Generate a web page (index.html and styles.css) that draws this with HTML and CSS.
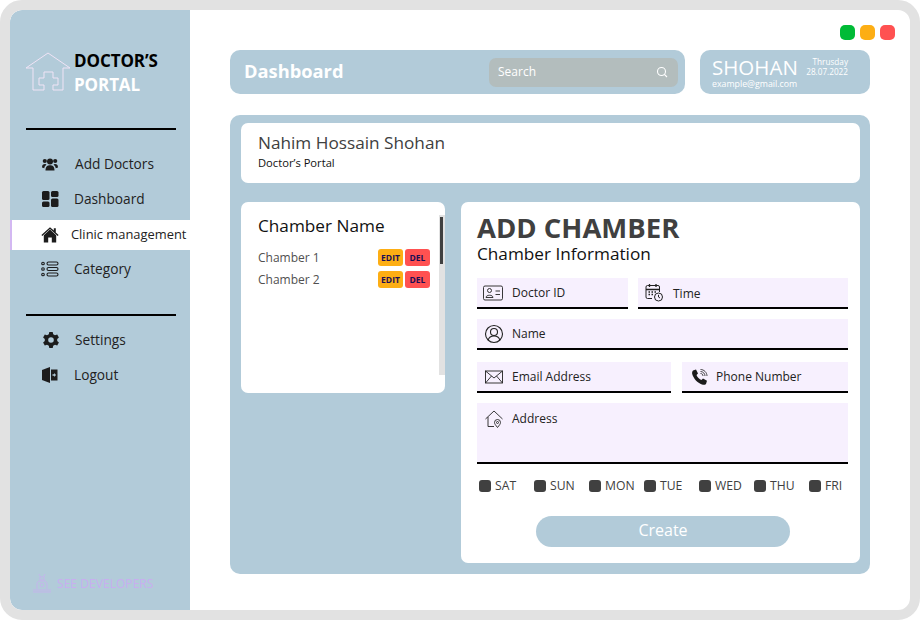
FILE: index.html
```html
<!DOCTYPE html>
<html>
<head>
  <title>Doctor's Portal</title>
  <meta name="viewport" content="width=device-width, initial-scale=1.0">
  <link rel="stylesheet" href="styles.css">
</head>
<body>
  <div class="frame">
    <aside class="sidebar">
      <div class="brand">
        <svg class="brand-icon" width="46" height="40" viewBox="0 0 46 40" fill="none" stroke="#f0e4f6" stroke-width="1">
          <path d="M1 16 L23 1 L45 16 H38 V38 H28 V33 H33 V26 H28 V20 H19 V26 H14 V33 H19 V38 H8 V16 Z"/>
        </svg>
        <div class="brand-text">
          <div class="brand-top">DOCTOR’S</div>
          <div class="brand-bottom">PORTAL</div>
        </div>
      </div>
      <hr class="side-line">
      <nav class="nav">
        <div class="nav-item item-add">
          <svg width="18" height="18" viewBox="0 0 18 18" fill="#1c1c1c">
            <circle cx="9" cy="6.5" r="3"/><circle cx="3.8" cy="6" r="2.1"/><circle cx="14.2" cy="6" r="2.1"/>
            <path d="M4.5 15.5 C4.5 11.5 6.5 10.3 9 10.3 C11.5 10.3 13.5 11.5 13.5 15.5 Z"/>
            <path d="M1 12.5 C1 9.5 2.5 8.8 4.5 9 L5.5 9.8 C4 10.8 3.5 11.5 3.3 13.2 Z"/>
            <path d="M17 12.5 C17 9.5 15.5 8.8 13.5 9 L12.5 9.8 C14 10.8 14.5 11.5 14.7 13.2 Z"/>
          </svg>
          <span>Add Doctors</span>
        </div>
        <div class="nav-item">
          <svg width="18" height="18" viewBox="0 0 18 18" fill="#1c1c1c">
            <rect x="1" y="1" width="7.5" height="9" rx="1.5"/><rect x="10" y="1" width="7.5" height="6" rx="1.5"/>
            <rect x="1" y="11.5" width="7.5" height="5.5" rx="1.5"/><rect x="10" y="8.5" width="7.5" height="8.5" rx="1.5"/>
          </svg>
          <span>Dashboard</span>
        </div>
        <div class="nav-item active">
          <svg width="18" height="18" viewBox="0 0 18 18" fill="#1c1c1c">
            <path d="M9 3.6 L15.2 9.2 V16.5 H10.8 V11.5 H7.2 V16.5 H2.8 V9.2 Z"/>
            <path d="M9 1.2 L12.8 4.6 V2.2 H14.8 V6.4 L17.6 8.9 L16.7 9.9 L9 3 L1.3 9.9 L0.4 8.9 Z"/>
          </svg>
          <span>Clinic management</span>
        </div>
        <div class="nav-item">
          <svg width="18" height="18" viewBox="0 0 18 18" fill="none" stroke="#1c1c1c" stroke-width="1.1">
            <circle cx="2" cy="3.5" r="1.3"/><circle cx="2" cy="9" r="1.3"/><circle cx="2" cy="14.5" r="1.3"/>
            <rect x="6" y="2" width="11" height="3" rx="1.5"/><rect x="6" y="7.5" width="11" height="3" rx="1.5"/><rect x="6" y="13" width="11" height="3" rx="1.5"/>
          </svg>
          <span>Category</span>
        </div>
      </nav>
      <hr class="side-line line-two">
      <nav class="nav nav-two">
        <div class="nav-item item-add item-gear">
          <svg width="18" height="18" viewBox="0 0 18 18" fill="#1c1c1c">
            <path fill-rule="evenodd" d="M7.3 1 H10.7 L11.2 3.2 L13 4.2 L15.2 3.5 L16.9 6.5 L15.2 8 V10 L16.9 11.5 L15.2 14.5 L13 13.8 L11.2 14.8 L10.7 17 H7.3 L6.8 14.8 L5 13.8 L2.8 14.5 L1.1 11.5 L2.8 10 V8 L1.1 6.5 L2.8 3.5 L5 4.2 L6.8 3.2 Z M9 6.2 A2.8 2.8 0 1 0 9 11.8 A2.8 2.8 0 1 0 9 6.2 Z"/>
          </svg>
          <span>Settings</span>
        </div>
        <div class="nav-item">
          <svg width="18" height="18" viewBox="0 0 18 18" fill="#1c1c1c">
            <path d="M1 4 L9 1 V17 L1 14 Z"/>
            <path fill-rule="evenodd" d="M10 3.5 H16.5 V14.5 H10 Z M11.5 8.3 V9.7 H13.2 V11 L15 9 L13.2 7 V8.3 Z"/>
          </svg>
          <span>Logout</span>
        </div>
      </nav>
      <div class="developers">
        <svg width="20" height="20" viewBox="0 0 20 20" fill="none" stroke="#c8aef0" stroke-width="0.8">
          <path d="M7 1 L8.5 4 H11.5 L13 1 M8 4 V7 H12 V4"/>
          <path d="M5 16 V11 C5 9 6.5 8 8 8 H12 C13.5 8 15 9 15 11 V16"/>
          <circle cx="10" cy="12" r="2"/>
          <path d="M1 17 H19 M1 19 H19"/>
        </svg>
        <span>SEE DEVELOPERS</span>
      </div>
    </aside>

    <main class="main">
      <div class="lights">
        <span class="light green"></span>
        <span class="light amber"></span>
        <span class="light red"></span>
      </div>
      <div class="topbar">
        <div class="title-bar">
          <h1>Dashboard</h1>
          <div class="search">
            <span>Search</span>
            <svg width="12" height="12" viewBox="0 0 12 12" fill="none" stroke="#fff" stroke-width="1.1">
              <circle cx="5.5" cy="5.5" r="4"/><path d="M8.5 8.5 L11 11"/>
            </svg>
          </div>
        </div>
        <div class="user-box">
          <div class="user-left">
            <div class="user-name">SHOHAN</div>
            <div class="user-mail">example@gmail.com</div>
          </div>
          <div class="user-date">
            <div>Thrusday</div>
            <div>28.07.2022</div>
          </div>
        </div>
      </div>

      <section class="panel">
        <div class="profile-card">
          <div class="profile-name">Nahim Hossain Shohan</div>
          <div class="profile-sub">Doctor’s Portal</div>
        </div>
        <div class="columns">
          <div class="chamber-card">
            <h2>Chamber Name</h2>
            <div class="chamber-row">
              <span class="chamber-label">Chamber 1</span>
              <span class="tag tag-edit">EDIT</span>
              <span class="tag tag-del">DEL</span>
            </div>
            <div class="chamber-row">
              <span class="chamber-label">Chamber 2</span>
              <span class="tag tag-edit">EDIT</span>
              <span class="tag tag-del">DEL</span>
            </div>
            <div class="scroll-track"><div class="scroll-thumb"></div></div>
          </div>

          <div class="form-card">
            <div class="form-title">ADD CHAMBER</div>
            <div class="form-sub">Chamber Information</div>

            <div class="field-row row-one">
              <div class="field field-id">
                <svg width="20" height="16" viewBox="0 0 20 16" fill="none" stroke="#222" stroke-width="0.9">
                  <rect x="0.5" y="1" width="19" height="14" rx="1.5"/>
                  <circle cx="6.5" cy="5.5" r="2"/>
                  <path d="M3 12.5 C3 9.5 10 9.5 10 12.5 Z M12.5 6 H17 M12.5 9.5 H17"/>
                </svg>
                <span>Doctor ID</span>
              </div>
              <div class="field field-time">
                <svg width="19" height="19" viewBox="0 0 19 19" fill="none" stroke="#222" stroke-width="1">
                  <path d="M7 15.5 H2.5 A1.5 1.5 0 0 1 1 14 V4 A1.5 1.5 0 0 1 2.5 2.5 H13 A1.5 1.5 0 0 1 14.5 4 V9"/>
                  <path d="M1 6.5 H14.5 M4.5 1 V4 M11 1 V4" stroke-width="1.3"/>
                  <path d="M3.5 9 H5 M6.5 9 H8 M9.5 9 H11 M3.5 11.5 H5 M6.5 11.5 H8" stroke-width="1.3"/>
                  <circle cx="13.5" cy="14" r="4"/>
                  <path d="M13.5 11.8 V14 L15 15"/>
                </svg>
                <span>Time</span>
              </div>
            </div>

            <div class="field-row row-two">
              <div class="field field-name">
                <svg width="20" height="20" viewBox="0 0 20 20" fill="none" stroke="#222" stroke-width="1.1">
                  <circle cx="10" cy="10" r="8.5"/>
                  <circle cx="10" cy="8" r="3.5"/>
                  <path d="M4.2 16 C5 13 7.5 12 10 12 C12.5 12 15 13 15.8 16"/>
                </svg>
                <span>Name</span>
              </div>
            </div>

            <div class="field-row row-three">
              <div class="field field-mail">
                <svg width="18" height="14" viewBox="0 0 18 14" fill="none" stroke="#222" stroke-width="0.9">
                  <rect x="0.5" y="1" width="17" height="12"/>
                  <path d="M0.5 1 L9 8 L17.5 1 M0.5 13 L6.5 6 M17.5 13 L11.5 6"/>
                </svg>
                <span>Email Address</span>
              </div>
              <div class="field field-phone">
                <svg width="18" height="18" viewBox="0 0 18 18" fill="none" stroke="#1c1c1c">
                  <path fill="#1c1c1c" stroke="none" d="M2 2.5 L5 1.5 L7 5.5 L5.5 7 C6 9 8.5 11.5 10.5 12 L12 10.5 L16 12.8 L15 16 C14 17 12.5 17 11 16.5 C6.5 15 2.5 10.5 1.2 6 C1 4.5 1.2 3.3 2 2.5 Z"/>
                  <path stroke-width="0.8" d="M9.5 5.5 C11 5.5 12 6.5 12 8 M9.5 3.5 C12 3.5 14 5.5 14 8 M9.5 1.5 C13 1.5 16 4.5 16 8"/>
                </svg>
                <span>Phone Number</span>
              </div>
            </div>

            <div class="field field-address">
              <svg width="18" height="18" viewBox="0 0 18 18" fill="none" stroke="#222" stroke-width="0.9">
                <path d="M0.5 9 L9 1 L17.5 9 M3 7 V16.5 H9"/>
                <path d="M12.5 17.5 C10.5 15 9.5 13.8 9.5 12.5 A3 3 0 0 1 15.5 12.5 C15.5 13.8 14.5 15 12.5 17.5 Z"/>
                <circle cx="12.5" cy="12.5" r="1"/>
              </svg>
              <span>Address</span>
            </div>

            <div class="days">
              <label class="day"><i class="box"></i>SAT</label>
              <label class="day"><i class="box"></i>SUN</label>
              <label class="day"><i class="box"></i>MON</label>
              <label class="day"><i class="box"></i>TUE</label>
              <label class="day"><i class="box"></i>WED</label>
              <label class="day"><i class="box"></i>THU</label>
              <label class="day"><i class="box"></i>FRI</label>
            </div>

            <button class="create-btn">Create</button>
          </div>
        </div>
      </section>
    </main>
  </div>
</body>
</html>
```

FILE: styles.css
```css
* {
  box-sizing: border-box;
}
html, body {
  margin: 0;
  height: 100%;
  background-color: #fff;
}
body {
  font-family: "Open Sans", "Liberation Sans", sans-serif;
  color: #222;
}
.frame {
  width: 920px;
  height: 620px;
  display: flex;
  border: 10px solid #e2e2e2;
  border-radius: 22px;
  overflow: hidden;
  background-color: #fff;
}

/* sidebar */
.sidebar {
  width: 180px;
  flex-shrink: 0;
  display: flex;
  flex-direction: column;
  padding-top: 42px;
  background-color: #b2cbd9;
  border-radius: 12px 0 0 12px;
}
.brand {
  display: flex;
  align-items: center;
  gap: 3px;
  padding-left: 15px;
  height: 40px;
}
.brand-text {
  padding-top: 2px;
}
.brand-top, .brand-bottom {
  font-size: 17px;
  font-weight: 700;
  line-height: 24px;
  letter-spacing: -0.1px;
}
.brand-top {
  color: #000;
}
.brand-bottom {
  color: #fff;
}
.side-line {
  width: 150px;
  height: 2px;
  margin: 36px 0 0 16px;
  border: 0;
  background-color: #000;
}
.line-two {
  margin-top: 30px;
}
.nav {
  display: flex;
  flex-direction: column;
  gap: 5px;
  margin-top: 19px;
}
.nav-two {
  margin-top: 9px;
}
.nav-item {
  display: flex;
  align-items: center;
  gap: 15px;
  height: 30px;
  padding-left: 31px;
  font-size: 13.7px;
  color: #222;
}
.nav-item span {
  padding-bottom: 2px;
}
.item-add {
  gap: 16px;
}
.item-gear {
  padding-left: 32px;
  gap: 15px;
}
.nav-item.active {
  gap: 12px;
  margin: 1px 0 -1px;
  background-color: #fff;
  border-left: 2px solid #d3b8f2;
  padding-left: 29px;
  font-size: 12.9px;
  white-space: nowrap;
}
.developers {
  display: flex;
  align-items: center;
  gap: 5px;
  margin-top: auto;
  margin-bottom: 17px;
  padding-left: 22px;
  font-size: 12.1px;
  color: #c8aef0;
}

/* main area */
.main {
  flex: 1;
  display: flex;
  flex-direction: column;
  padding: 15px 15px 0 40px;
}
.lights {
  display: flex;
  justify-content: flex-end;
  gap: 5px;
  height: 15px;
}
.light {
  width: 15px;
  height: 15px;
  border-radius: 5px;
}
.green {
  background-color: #00bb36;
}
.amber {
  background-color: #fdae14;
}
.red {
  background-color: #ff5151;
}
.topbar {
  display: flex;
  gap: 15px;
  margin-top: 10px;
  padding-right: 25px;
}
.title-bar {
  width: 455px;
  height: 44px;
  display: flex;
  align-items: center;
  justify-content: space-between;
  padding: 0 7px 0 14px;
  background-color: #b2cbd9;
  border-radius: 10px;
}
.title-bar h1 {
  margin: 0;
  padding-bottom: 3px;
  font-size: 18.3px;
  font-weight: 700;
  color: #fff;
}
.search {
  width: 189px;
  height: 29px;
  display: flex;
  align-items: center;
  justify-content: space-between;
  padding: 0 10px 0 9px;
  background-color: #b3bdbd;
  border-radius: 7px;
  font-size: 12px;
  color: #fff;
}
.search span {
  padding-bottom: 2px;
}
.user-box {
  width: 170px;
  height: 44px;
  display: flex;
  justify-content: space-between;
  padding: 7px 22px 0 12px;
  background-color: #b2cbd9;
  border-radius: 10px;
  color: #fff;
}
.user-name {
  font-size: 20.5px;
  line-height: 21px;
}
.user-mail {
  margin-top: 1px;
  font-size: 8.8px;
  line-height: 10px;
}
.user-date {
  font-size: 8.2px;
  line-height: 10px;
  text-align: right;
}

/* big panel */
.panel {
  width: 640px;
  height: 459px;
  margin-top: 21px;
  padding: 8px 10px 11px 11px;
  background-color: #b2cbd9;
  border-radius: 10px;
}
.profile-card {
  height: 60px;
  padding: 8px 0 0 17px;
  background-color: #fff;
  border-radius: 7px;
}
.profile-name {
  font-size: 17.2px;
  line-height: 24px;
  color: #404040;
}
.profile-sub {
  font-size: 11.2px;
  line-height: 15px;
  color: #111;
}
.columns {
  display: flex;
  align-items: flex-start;
  gap: 16px;
  margin-top: 19px;
}
.chamber-card {
  position: relative;
  width: 204px;
  height: 191px;
  padding: 11px 15px 0 17px;
  background-color: #fff;
  border-radius: 7px;
}
.chamber-card h2 {
  margin: 0 0 10px;
  font-size: 17.2px;
  line-height: 25px;
  font-weight: 400;
  color: #111;
}
.chamber-row {
  display: flex;
  align-items: center;
  gap: 2px;
  height: 18px;
  margin-bottom: 4px;
}
.chamber-label {
  flex: 1;
  font-size: 12px;
  color: #505050;
}
.tag {
  height: 17px;
  line-height: 17px;
  border-radius: 3px;
  text-align: center;
  font-size: 8.5px;
  font-weight: 700;
  color: #1b0f55;
}
.tag-edit {
  width: 25px;
  background-color: #fdae14;
}
.tag-del {
  width: 25px;
  background-color: #ff5151;
}
.scroll-track {
  position: absolute;
  top: 13px;
  right: 0;
  width: 6px;
  height: 160px;
  background-color: #e2e2e2;
}
.scroll-thumb {
  width: 3px;
  height: 47px;
  margin: 2px 0 0 1px;
  background-color: #404040;
}

/* add chamber form */
.form-card {
  width: 399px;
  height: 361px;
  padding: 10px 12px 0 16px;
  background-color: #fff;
  border-radius: 7px;
}
.form-title {
  font-size: 27.5px;
  line-height: 31px;
  font-weight: 700;
  color: #404040;
}
.form-sub {
  font-size: 17.2px;
  line-height: 22px;
  color: #111;
}
.field-row {
  display: flex;
}
.field {
  display: flex;
  align-items: center;
  gap: 9px;
  padding-left: 6px;
  background-color: #f7f0fe;
  border-bottom: 2px solid #000;
  font-size: 12px;
  color: #222;
}
.row-one {
  gap: 10px;
  margin-top: 13px;
}
.field-id {
  width: 151px;
  height: 31px;
}
.field-time {
  width: 210px;
  height: 31px;
  padding-left: 7px;
  gap: 9px;
}
.field-time span {
  padding-top: 2px;
}
.row-two {
  margin-top: 10px;
}
.field-name {
  width: 371px;
  height: 31px;
  gap: 8px;
  padding-left: 7px;
}
.row-three {
  gap: 11px;
  margin-top: 12px;
}
.field-mail {
  width: 194px;
  height: 31px;
  padding-left: 8px;
}
.field-phone {
  width: 166px;
  height: 31px;
  padding-left: 9px;
  gap: 7px;
}
.field-address {
  width: 371px;
  height: 61px;
  margin-top: 10px;
  align-items: flex-start;
  padding-top: 7px;
  padding-left: 8px;
}
.days {
  display: flex;
  margin-top: 13px;
  padding-left: 2px;
}
.day {
  flex: none;
  width: 55px;
  display: flex;
  align-items: center;
  gap: 4px;
  font-size: 12.2px;
  line-height: 18px;
  color: #404040;
  white-space: nowrap;
}
.box {
  width: 12px;
  height: 12px;
  border-radius: 3px;
  background-color: #404040;
}
.create-btn {
  display: block;
  width: 254px;
  height: 31px;
  margin: 21px 0 0 59px;
  padding: 0 0 3px;
  border: 0;
  border-radius: 16px;
  background-color: #b2cbd9;
  font-family: inherit;
  font-size: 16px;
  color: #fff;
}
```
